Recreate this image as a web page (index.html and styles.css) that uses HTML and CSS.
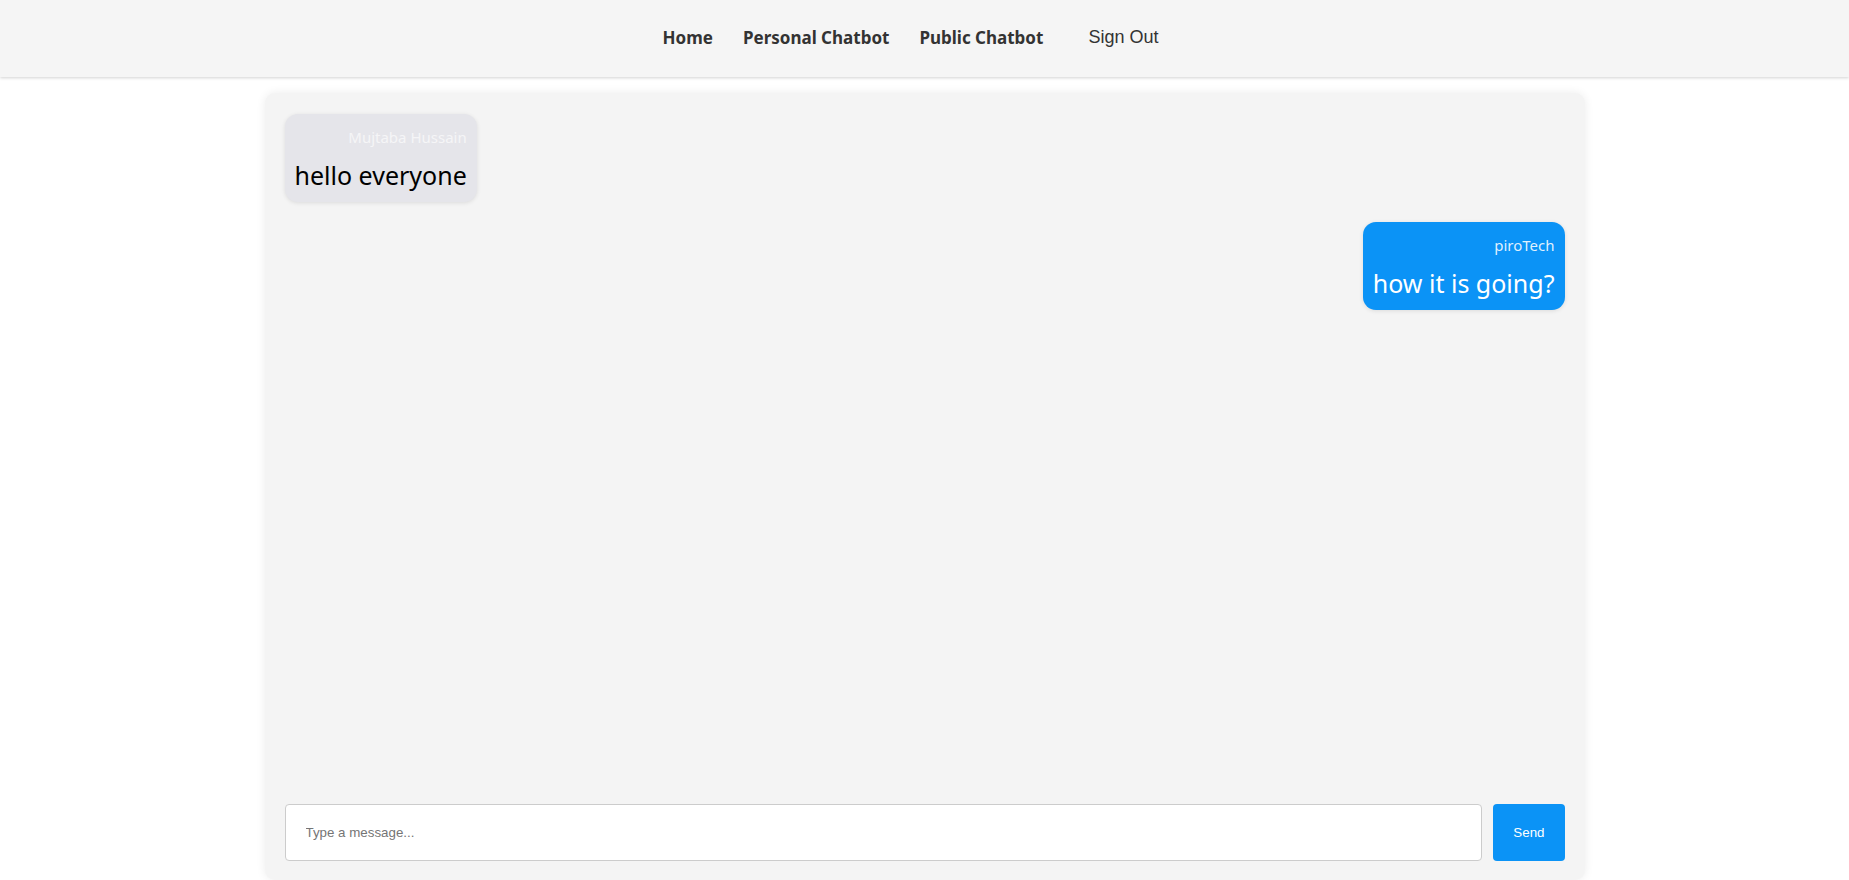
FILE: index.html
```html
<!DOCTYPE html>
<html lang="en">
<head>
<meta charset="utf-8">
<title>Public Chatbot</title>
<link rel="stylesheet" href="styles.css">
</head>
<body>
<header class="topbar">
  <nav class="nav">
    <a class="nav-link" href="#">Home</a>
    <a class="nav-link" href="#">Personal Chatbot</a>
    <a class="nav-link" href="#">Public Chatbot</a>
    <button class="signout" type="button">Sign Out</button>
  </nav>
</header>
<main class="chat">
  <div class="messages">
    <div class="msg msg-other">
      <div class="msg-name">Mujtaba Hussain</div>
      <div class="msg-text">hello everyone</div>
    </div>
    <div class="msg msg-mine">
      <div class="msg-name">piroTech</div>
      <div class="msg-text">how it is going?</div>
    </div>
  </div>
  <form class="composer">
    <input class="composer-input" type="text" placeholder="Type a message...">
    <button class="composer-send" type="button">Send</button>
  </form>
</main>
</body>
</html>
```

FILE: styles.css
```css
html, body {
  margin: 0;
  padding: 0;
  background: #ffffff;
}

body {
  font-family: "Noto Sans", "DejaVu Sans", sans-serif;
  color: #000;
}

.topbar {
  height: 77px;
  background: #f5f5f5;
  box-shadow: 0 1px 3px rgba(0, 0, 0, 0.18);
  display: flex;
  align-items: center;
  justify-content: center;
  position: relative;
  z-index: 1;
}

.nav {
  display: flex;
  align-items: center;
  margin-right: 28px;
  margin-bottom: 2px;
}

.nav-link {
  font-family: "Noto Sans", sans-serif;
  font-weight: 700;
  font-size: 17px;
  color: #333;
  text-decoration: none;
  margin-right: 30px;
}

.nav-link:nth-child(3) {
  margin-right: 45px;
}

.signout {
  font-family: "Liberation Sans", Arial, sans-serif;
  font-size: 18px;
  color: #333;
  background: none;
  border: none;
  padding: 0;
  cursor: pointer;
}

.chat {
  box-sizing: border-box;
  width: 1320px;
  height: 787px;
  margin: 16px auto 0;
  padding: 21px 20px 19px;
  background: #f4f4f4;
  border-radius: 10px;
  box-shadow: 0 0 10px rgba(0, 0, 0, 0.08);
  display: flex;
  flex-direction: column;
}

.messages {
  flex: 1;
  display: flex;
  flex-direction: column;
  align-items: flex-start;
  gap: 20px;
}

.msg {
  box-sizing: border-box;
  padding: 12px 10px 11px;
  border-radius: 13px;
  text-align: right;
  box-shadow: 0 1px 4px rgba(0, 0, 0, 0.1);
}

.msg-other {
  background: #e5e5ea;
  color: #000;
}

.msg-other .msg-name {
  color: #f5f5f7;
}

.msg-mine {
  align-self: flex-end;
  background: #0b93f6;
  color: #fff;
}

.msg-mine .msg-name {
  color: rgba(255, 255, 255, 0.88);
}

.msg-name {
  font-size: 15px;
  line-height: 20px;
  margin-top: 1px;
  margin-bottom: 13px;
}

.msg-text {
  font-size: 25px;
  line-height: 31px;
}

.composer {
  display: flex;
  gap: 11px;
  margin: 0;
}

.composer-input {
  flex: 1;
  box-sizing: border-box;
  height: 57px;
  padding: 0 20px;
  border: 1px solid #ccc;
  border-radius: 4px;
  background: #fff;
  font-family: "Liberation Sans", Arial, sans-serif;
  font-size: 13.333px;
  color: #333;
  outline: none;
}

.composer-input::placeholder {
  color: #757575;
}

.composer-send {
  box-sizing: border-box;
  height: 57px;
  padding: 0 20px;
  border: none;
  border-radius: 4px;
  background: #0b93f6;
  color: #fff;
  font-family: "Liberation Sans", Arial, sans-serif;
  font-size: 13.333px;
  cursor: pointer;
}
```
